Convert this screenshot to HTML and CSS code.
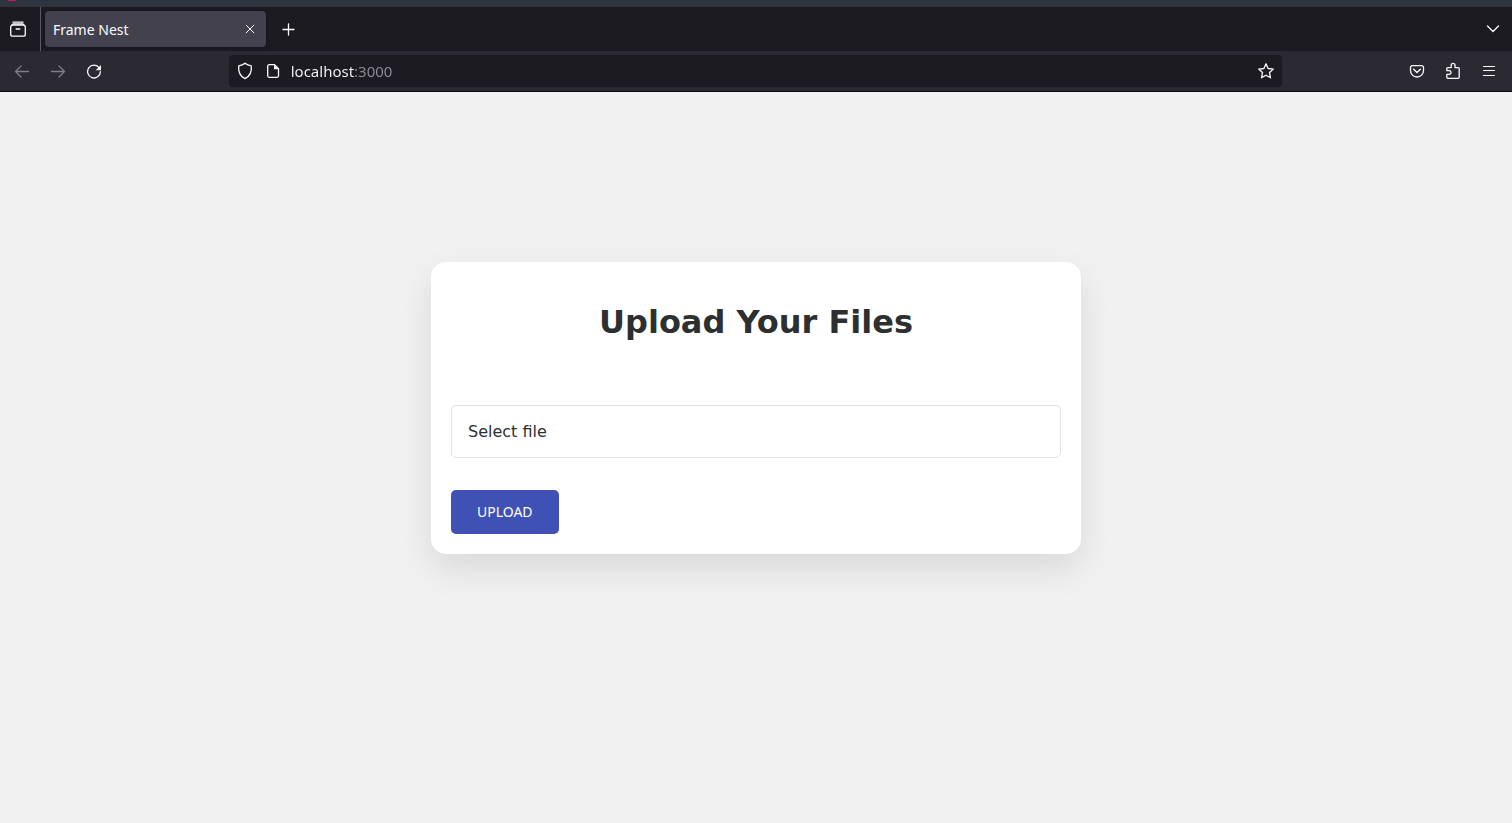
FILE: index.html
```html
<!DOCTYPE html>
<html lang="en">
<head>
<meta charset="utf-8">
<title>Frame Nest</title>
<link rel="stylesheet" href="styles.css">
</head>
<body>
<header class="browser">
  <div class="desktop-strip"><span class="desktop-badge"></span></div>
  <div class="tab-bar">
    <button class="recent-button" aria-label="Recent browsing">
      <svg class="icon" width="18" height="18" viewBox="0 0 18 18"><path d="M4 2.200h10"/><rect x="1.7" y="5.200" width="14.6" height="11" rx="2"/><path d="M3 5l1-1h10l1 1M7.200 9h3.600"/></svg>
    </button>
    <div class="tab">
      <span class="tab-title">Frame Nest</span>
      <button class="tab-close" aria-label="Close tab">
        <svg class="icon thin" width="10" height="10" viewBox="0 0 10 10"><path d="M1.200 1.200l7.600 7.600M8.800 1.200l-7.600 7.600"/></svg>
      </button>
    </div>
    <button class="tool-button" aria-label="New tab">
      <svg class="icon" width="13" height="13" viewBox="0 0 13 13"><path d="M6.500 1v11M1 6.500h11"/></svg>
    </button>
    <button class="tool-button tabs-menu" aria-label="List all tabs">
      <svg class="icon" width="14" height="14" viewBox="0 0 14 14"><path d="M1.500 4L7 9.500 12.500 4"/></svg>
    </button>
  </div>
  <div class="toolbar">
    <button class="tool-button" aria-label="Back" disabled>
      <svg class="icon" width="16" height="16" viewBox="0 0 16 16"><path d="M14.500 8.500h-13M7 3L1.500 8.500 7 14"/></svg>
    </button>
    <button class="tool-button" aria-label="Forward" disabled>
      <svg class="icon" width="16" height="16" viewBox="0 0 16 16"><path d="M1.500 8.500h13M9 3l5.500 5.500L9 14"/></svg>
    </button>
    <button class="tool-button" aria-label="Reload">
      <svg class="icon" width="16" height="16" viewBox="0 0 16 16"><path d="M13.300 5A6.400 6.400 0 1 0 14.400 8.700"/><path class="solid" d="M15 1.900v5.300H9.600z"/></svg>
    </button>
    <span class="spring"></span>
    <div class="url-bar">
      <svg class="icon" width="16" height="18" viewBox="0 0 16 18"><path d="M8 1.300C6.200 2.900 4.200 3.600 1.700 3.800C1.100 9.600 2.800 14.200 8 16.700C13.200 14.200 14.900 9.600 14.300 3.800C11.800 3.600 9.800 2.900 8 1.300z"/></svg>
      <svg class="icon" width="16" height="16" viewBox="0 0 16 16"><path d="M4.200 1.700h5.300l4 4v7.100a1.500 1.500 0 0 1-1.500 1.500H4.200a1.500 1.500 0 0 1-1.500-1.500V3.200a1.500 1.500 0 0 1 1.500-1.500z"/><path class="solid" d="M9 1.700v4.500h4.500z"/></svg>
      <input class="url-input" type="text" aria-label="Address" value="localhost:3000">
      <button class="star-button" aria-label="Bookmark this page">
        <svg class="icon" width="18" height="18" viewBox="0 0 18 18"><path d="M9 1.800l2.100 4.700 5.200.6-3.800 3.500 1 5.200L9 13.200l-4.500 2.600 1-5.200L1.700 7.100l5.200-.6z"/></svg>
      </button>
    </div>
    <span class="spring"></span>
    <button class="tool-button" aria-label="Save to Pocket">
      <svg class="icon" width="16" height="16" viewBox="0 0 16 16"><path d="M3.200 2.700h9.600a1.700 1.700 0 0 1 1.700 1.700v3.100a6.500 6.500 0 0 1-13 0V4.400a1.700 1.700 0 0 1 1.700-1.700z"/><path d="M4.600 6.200L8 9.500l3.400-3.300"/></svg>
    </button>
    <button class="tool-button" aria-label="Extensions">
      <svg class="icon" width="16" height="18" viewBox="0 0 16 18"><path d="M6.200 5.600V3.300a1.900 1.900 0 0 1 3.800 0v2.300h3.200a1 1 0 0 1 1 1v8.700a1 1 0 0 1-1 1H2.800a1 1 0 0 1-1-1v-3h2.400a1.800 1.800 0 0 0 0-3.600H1.800V6.600a1 1 0 0 1 1-1z"/></svg>
    </button>
    <button class="tool-button" aria-label="Open application menu">
      <svg class="icon thin" width="14" height="12" viewBox="0 0 14 12"><path d="M1.500 1.500h11M1.500 5.500h11M1.500 10.500h11"/></svg>
    </button>
  </div>
</header>
<main class="page">
  <form class="card">
    <h1 class="card-title">Upload Your Files</h1>
    <label class="file-field" for="file">Select file</label>
    <input class="file-input" id="file" type="file">
    <button class="upload-button" type="submit">UPLOAD</button>
  </form>
</main>
</body>
</html>
```
FILE: styles.css
```css
* {
  box-sizing: border-box;
}

body {
  margin: 0;
  min-height: 100vh;
  display: flex;
  flex-direction: column;
  background: #f1f1f1;
  font-family: "DejaVu Sans", sans-serif;
}

button {
  padding: 0;
  border: 0;
  background: none;
  color: inherit;
}

.browser {
  background: #2b2a33;
  border-bottom: 1px solid #0c0c0d;
  color: #fbfbfe;
  font-family: "Noto Sans", sans-serif;
}

.desktop-strip {
  height: 7px;
  padding-left: 8px;
  background: #2e3440;
}

.desktop-badge {
  display: block;
  width: 8px;
  height: 1px;
  border-radius: 0 0 4px 4px;
  background: #e0106a;
}

.tab-bar {
  display: flex;
  align-items: center;
  height: 44px;
  background: #1c1b22;
}

.recent-button {
  display: flex;
  align-items: center;
  justify-content: center;
  width: 41px;
  height: 44px;
  padding-right: 4px;
  border-right: 1px solid #5b5a61;
}

.tab {
  display: flex;
  align-items: center;
  justify-content: space-between;
  width: 221px;
  height: 36px;
  margin-left: 4px;
  padding: 0 8px;
  border-radius: 4px;
  background: #42414d;
  box-shadow: 0 0 4px rgba(0, 0, 0, 0.4);
  font-size: 14px;
}

.tab-close {
  display: flex;
  align-items: center;
  justify-content: center;
  width: 16px;
  height: 16px;
}

.tool-button {
  display: flex;
  flex: none;
  align-items: center;
  justify-content: center;
  width: 36px;
  height: 36px;
}

.tool-button:disabled {
  opacity: 0.4;
}

.tab + .tool-button {
  margin-left: 4px;
}

.tabs-menu {
  margin-left: auto;
  margin-right: 1px;
}

.icon {
  flex: none;
  fill: none;
  stroke: currentColor;
  stroke-width: 1.3;
  stroke-linecap: round;
  stroke-linejoin: round;
}

.thin {
  stroke-width: 1;
}

.solid {
  fill: currentColor;
  stroke: none;
}

.toolbar {
  display: flex;
  align-items: center;
  height: 40px;
  padding: 0 5px 0 4px;
}

.spring {
  flex: 10;
}

.url-bar {
  display: flex;
  flex: 89;
  align-items: center;
  gap: 12px;
  height: 32px;
  padding: 0 7px 0 8px;
  border-radius: 4px;
  background: #1c1b22;
}

.url-input {
  flex: 1;
  min-width: 0;
  margin-left: -2px;
  padding: 0;
  border: 0;
  outline: 0;
  background: linear-gradient(to right, #fbfbfe 64px, #8f8e96 64px);
  -webkit-background-clip: text;
  background-clip: text;
  color: transparent;
  caret-color: #fbfbfe;
  font: 15px "Noto Sans", sans-serif;
}

.star-button {
  display: flex;
}

.page {
  display: flex;
  flex: 1;
  align-items: center;
  justify-content: center;
  padding: 20px 20px 120px;
}

.card {
  display: flex;
  flex-direction: column;
  align-items: flex-start;
  width: 100%;
  max-width: 650px;
  padding: 40px 20px 20px;
  border-radius: 15px;
  background: #fff;
  box-shadow: 0 15px 35px rgba(0, 0, 0, 0.1);
  color: #2d3030;
}

.card-title {
  align-self: stretch;
  margin: 0 0 63px;
  font-size: 32px;
  line-height: 40px;
  text-align: center;
}

.file-field {
  align-self: stretch;
  padding: 16px;
  border: 1px solid #e2e2e2;
  border-radius: 5px;
  font-size: 16px;
  line-height: 19px;
}

.file-field:has(+ .file-input:focus-visible) {
  border-color: #3f51b5;
}

.file-input {
  position: absolute;
  width: 1px;
  height: 1px;
  opacity: 0;
}

.upload-button {
  height: 44px;
  margin-top: 32px;
  padding: 0 26px;
  border-radius: 5px;
  background: #3f51b5;
  color: #fff;
  font: 14px "Noto Sans", sans-serif;
}
```
